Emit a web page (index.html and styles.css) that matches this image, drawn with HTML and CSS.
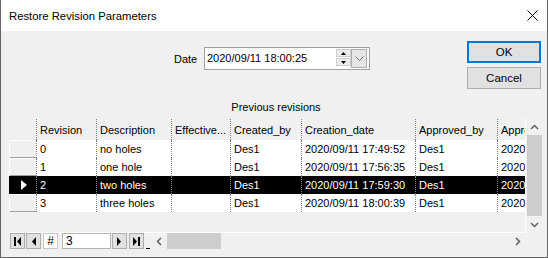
FILE: index.html
```html
<!DOCTYPE html>
<html lang="en">
  <head>
    <meta charset="UTF-8" />
    <title>Restore Revision Parameters</title>
    <link rel="stylesheet" href="styles.css">
  </head>
  <body>
    <div class="dialog">
      <div class="titlebar">
        <span class="title">Restore Revision Parameters</span>
        <svg class="close" width="11" height="11" viewBox="0 0 11 11">
          <path d="M0.5 0.5L10.5 10.5M10.5 0.5L0.5 10.5" stroke="#000" stroke-width="1" />
        </svg>
      </div>

      <div class="body">
        <div class="top">
          <div class="date-group">
            <span class="date-label">Date</span>
            <div class="date-box">
              <span class="date-text">2020/09/11 18:00:25</span>
              <div class="spin">
                <span class="spin-btn"><svg width="5" height="3"><polygon points="0,3 2.5,0 5,3" fill="#000" /></svg></span>
                <span class="spin-btn"><svg width="5" height="3"><polygon points="0,0 2.5,3 5,0" fill="#000" /></svg></span>
              </div>
              <div class="drop-btn">
                <svg width="9" height="5"><polyline points="0.5,0.5 4.5,4.5 8.5,0.5" fill="none" stroke="#707070" stroke-width="1" /></svg>
              </div>
            </div>
          </div>
          <div class="buttons">
            <button class="btn ok">OK</button>
            <button class="btn">Cancel</button>
          </div>
        </div>

        <div class="caption">Previous revisions</div>

        <div class="grid-row">
          <div class="grid">
            <div class="grid-head">
              <div class="rh"></div>
              <div class="cell c-rev">Revision</div>
              <div class="cell c-desc">Description</div>
              <div class="cell c-eff">Effective...</div>
              <div class="cell c-cby">Created_by</div>
              <div class="cell c-cdate">Creation_date</div>
              <div class="cell c-aby">Approved_by</div>
              <div class="cell c-adate">Approved_date</div>
            </div>
            <div class="grid-line">
              <div class="rh"></div>
              <div class="cell c-rev">0</div>
              <div class="cell c-desc">no holes</div>
              <div class="cell c-eff"></div>
              <div class="cell c-cby">Des1</div>
              <div class="cell c-cdate">2020/09/11 17:49:52</div>
              <div class="cell c-aby">Des1</div>
              <div class="cell c-adate">2020/09/11 17:49:52</div>
            </div>
            <div class="grid-line">
              <div class="rh"></div>
              <div class="cell c-rev">1</div>
              <div class="cell c-desc">one hole</div>
              <div class="cell c-eff"></div>
              <div class="cell c-cby">Des1</div>
              <div class="cell c-cdate">2020/09/11 17:56:35</div>
              <div class="cell c-aby">Des1</div>
              <div class="cell c-adate">2020/09/11 17:56:35</div>
            </div>
            <div class="grid-line sel">
              <div class="rh"><span class="arrow"></span></div>
              <div class="cell c-rev">2</div>
              <div class="cell c-desc">two holes</div>
              <div class="cell c-eff"></div>
              <div class="cell c-cby">Des1</div>
              <div class="cell c-cdate">2020/09/11 17:59:30</div>
              <div class="cell c-aby">Des1</div>
              <div class="cell c-adate">2020/09/11 17:59:30</div>
            </div>
            <div class="grid-line">
              <div class="rh"></div>
              <div class="cell c-rev">3</div>
              <div class="cell c-desc">three holes</div>
              <div class="cell c-eff"></div>
              <div class="cell c-cby">Des1</div>
              <div class="cell c-cdate">2020/09/11 18:00:39</div>
              <div class="cell c-aby">Des1</div>
              <div class="cell c-adate">2020/09/11 18:00:39</div>
            </div>
          </div>

          <div class="vscroll">
            <div class="sb-btn">
              <svg width="9" height="6"><polyline points="1,5 4.5,1.5 8,5" fill="none" stroke="#606060" stroke-width="1.5" /></svg>
            </div>
            <div class="vs-thumb"></div>
            <div class="sb-btn">
              <svg width="9" height="6"><polyline points="1,1 4.5,4.5 8,1" fill="none" stroke="#606060" stroke-width="1.5" /></svg>
            </div>
          </div>
        </div>

        <div class="bottom-row">
          <div class="nav">
            <span class="nav-btn">
              <svg width="7" height="9"><rect x="0" y="0" width="2" height="9" fill="#000" /><polygon points="7,0 3,4.5 7,9" fill="#000" /></svg>
            </span>
            <span class="nav-btn prev">
              <svg width="5" height="9"><polygon points="5,0 1,4.5 5,9" fill="#000" /></svg>
            </span>
            <span class="nav-pos">#</span>
            <span class="nav-input">3</span>
            <span class="nav-btn next">
              <svg width="5" height="9"><polygon points="0,0 4,4.5 0,9" fill="#000" /></svg>
            </span>
            <span class="nav-btn last">
              <svg width="7" height="9"><polygon points="0,0 4,4.5 0,9" fill="#000" /><rect x="5" y="0" width="2" height="9" fill="#000" /></svg>
            </span>
            <span class="nav-mark"></span>
          </div>
          <div class="hscroll">
            <div class="sb-btn side">
              <svg width="6" height="9"><polyline points="5,1 1.5,4.5 5,8" fill="none" stroke="#606060" stroke-width="1.5" /></svg>
            </div>
            <div class="hs-thumb"></div>
            <div class="hs-space"></div>
            <div class="sb-btn side">
              <svg width="6" height="9"><polyline points="1,1 4.5,4.5 1,8" fill="none" stroke="#606060" stroke-width="1.5" /></svg>
            </div>
          </div>
          <div class="corner"></div>
        </div>
      </div>
    </div>
  </body>
</html>
```

FILE: styles.css
```css
body {
  margin: 0;
}

.dialog {
  width: 548px;
  height: 258px;
  box-sizing: border-box;
  border: 1px solid #646464;
  border-top: none;
  display: flex;
  flex-direction: column;
  font-family: "Liberation Sans", Arial, sans-serif;
  font-size: 11px;
  color: #000;
}

/* title bar */
.titlebar {
  height: 31px;
  flex: none;
  background: #fff;
  display: flex;
  align-items: center;
  justify-content: space-between;
  padding: 0 9px 0 8px;
}

.title {
  font-size: 11.3px;
}

.body {
  flex: 1;
  background: #f0f0f0;
  padding: 10px 4px 0 8px;
  display: flex;
  flex-direction: column;
}

/* date + buttons */
.top {
  display: flex;
  align-items: flex-start;
}

.date-group {
  display: flex;
  align-items: center;
  margin-left: 165px;
  margin-top: 6px;
}

.date-label {
  width: 30px;
}

.date-box {
  width: 166px;
  height: 23px;
  box-sizing: border-box;
  border: 1px solid #a0a0a0;
  background: #fff;
  display: flex;
  align-items: flex-start;
  padding: 1px 2px 0 2px;
}

.date-text {
  flex: 1;
  line-height: 18px;
}

.spin {
  width: 15px;
  display: flex;
  flex-direction: column;
  gap: 1px;
}

.spin-btn {
  height: 8px;
  box-sizing: border-box;
  border: 1px solid #cfcfcf;
  background: #ececec;
  display: flex;
  align-items: center;
  justify-content: center;
}

.drop-btn {
  width: 16px;
  height: 19px;
  box-sizing: border-box;
  border: 1px solid #adadad;
  background: #e5e5e5;
  display: flex;
  align-items: center;
  justify-content: center;
}

.buttons {
  margin-left: auto;
  margin-right: 2px;
  display: flex;
  flex-direction: column;
  gap: 4px;
}

.btn {
  width: 74px;
  height: 22px;
  box-sizing: border-box;
  border: 1px solid #adadad;
  background: #e1e1e1;
  font: inherit;
  font-size: 11.5px;
  color: #000;
  padding: 0;
}

.btn.ok {
  border: 2px solid #0078d7;
}

.caption {
  margin-top: 11px;
  line-height: 14px;
  text-align: center;
}

/* grid */
.grid-row {
  display: flex;
  margin-top: 4px;
  height: 115px;
}

.grid {
  width: 517px;
  flex: none;
  box-sizing: border-box;
  border-right: 1px solid #fff;
  border-bottom: 1px solid #fff;
  overflow: hidden;
}

.grid-head {
  display: flex;
  height: 22px;
  line-height: 22px;
  padding-top: 1px;
  box-sizing: border-box;
}

.grid-line {
  display: flex;
  height: 18px;
  line-height: 18px;
  background: #fff;
}

.rh {
  width: 27px;
  flex: none;
}

.grid-line .rh {
  background: #f0f0f0;
  box-shadow: inset 1px 1px #fff, inset 0 -1px #a0a0a0;
}

.cell {
  flex: none;
  box-sizing: border-box;
  border-left: 1px dotted #808080;
  padding-left: 3px;
  white-space: nowrap;
  overflow: hidden;
}

.c-rev { width: 60px; }
.c-desc { width: 75px; }
.c-eff { width: 59px; }
.c-cby { width: 71px; }
.c-cdate { width: 114px; }
.c-aby { width: 82px; }
.c-adate { width: 28px; }

.grid-line.sel {
  background: #000;
  color: #fff;
}

.grid-line.sel .rh {
  background: #000;
  box-shadow: none;
  display: flex;
  align-items: center;
  justify-content: center;
}

.arrow {
  width: 0;
  height: 0;
  border-left: 6px solid #fff;
  border-top: 5px solid transparent;
  border-bottom: 5px solid transparent;
  margin-left: 2px;
}

/* scroll bars */
.vscroll {
  width: 17px;
  display: flex;
  flex-direction: column;
}

.sb-btn {
  height: 17px;
  flex: none;
  display: flex;
  align-items: center;
  justify-content: center;
}

.sb-btn.side {
  width: 17px;
}

.vs-thumb {
  flex: 1;
  background: #cdcdcd;
  margin: 0 1px;
}

.bottom-row {
  display: flex;
  height: 17px;
}

.nav {
  width: 141px;
  box-sizing: border-box;
  padding-left: 1px;
  display: flex;
  align-items: flex-start;
}

.nav-btn {
  width: 15px;
  height: 16px;
  flex: none;
  box-sizing: border-box;
  border: 1px solid #adadad;
  background: #e1e1e1;
  display: flex;
  align-items: center;
  justify-content: center;
}

.nav-btn.prev {
  margin-left: 1px;
}

.nav-btn.next {
  margin-left: 1px;
}

.nav-btn.last {
  margin-left: 2px;
}

.nav-pos {
  width: 15px;
  height: 16px;
  box-sizing: border-box;
  border: 1px solid #c8c8c8;
  background: #fff;
  margin-left: 2px;
  text-align: center;
  line-height: 14px;
  font-size: 12px;
}

.nav-input {
  width: 49px;
  height: 16px;
  box-sizing: border-box;
  border: 1px solid #b4b4b4;
  background: #fff;
  margin-left: 4px;
  padding-left: 3px;
  line-height: 14px;
  font-size: 12px;
}

.nav-mark {
  width: 4px;
  height: 1px;
  background: #000;
  margin: 15px 0 0 2px;
}

.hscroll {
  width: 376px;
  display: flex;
}

.hs-thumb {
  width: 54px;
  background: #cdcdcd;
  margin-bottom: 1px;
}

.hs-space {
  flex: 1;
}

.corner {
  width: 17px;
}
```
